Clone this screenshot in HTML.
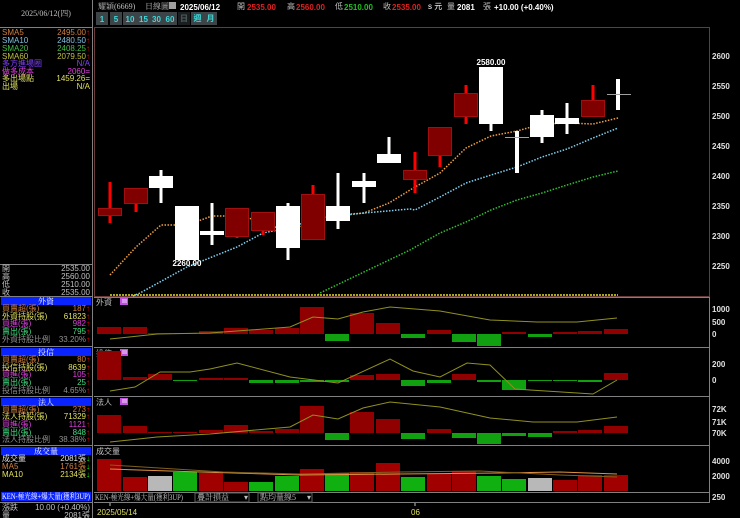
<!DOCTYPE html>
<html><head><meta charset="utf-8"><style>
html,body{margin:0;padding:0;background:#000;width:740px;height:518px;overflow:hidden}
svg{display:block}
text{font-family:"Liberation Sans","Noto Sans CJK TC",sans-serif;font-size:8px}
.s{font-family:"Liberation Serif","Noto Serif CJK SC",serif;font-size:8px}
</style></head><body>
<svg width="740" height="518" viewBox="0 0 740 518" xmlns="http://www.w3.org/2000/svg">
<rect width="740" height="518" fill="#000"/>
<rect x="0" y="0" width="92" height="27" fill="#000"/>
<text x="46" y="16" fill="#c0c0c0" text-anchor="middle" class="s">2025/06/12(四)</text>
<line x1="0" y1="27.5" x2="93" y2="27.5" stroke="#808080"/>
<line x1="92.5" y1="0" x2="92.5" y2="518" stroke="#808080"/>
<g class="s">
<text x="2" y="35" fill="#d08040">SMA5</text><text x="90" y="35" fill="#d08040" text-anchor="end">2495.00<tspan fill="#f00">↑</tspan></text>
<text x="2" y="43" fill="#80c0e0">SMA10</text><text x="90" y="43" fill="#80c0e0" text-anchor="end">2480.50<tspan fill="#f00">↑</tspan></text>
<text x="2" y="51" fill="#40c040">SMA20</text><text x="90" y="51" fill="#40c040" text-anchor="end">2408.25<tspan fill="#f00">↑</tspan></text>
<text x="2" y="59" fill="#c0c040">SMA60</text><text x="90" y="59" fill="#c0c040" text-anchor="end">2079.50<tspan fill="#f00">↑</tspan></text>
<text x="2" y="66" fill="#8040ff">多方進場圈</text><text x="90" y="66" fill="#8040ff" text-anchor="end">N/A</text>
<text x="2" y="74" fill="#e040e0">做多成本</text><text x="90" y="74" fill="#e040e0" text-anchor="end">2060=</text>
<text x="2" y="81" fill="#e0e060">多出場點</text><text x="90" y="81" fill="#e0e060" text-anchor="end">1459.26=</text>
<text x="2" y="89" fill="#e0e060">出場</text><text x="90" y="89" fill="#e0e060" text-anchor="end">N/A</text>
</g>
<line x1="0" y1="264.5" x2="93" y2="264.5" stroke="#808080"/>
<g class="s" fill="#c0c0c0">
<text x="2" y="271">開</text><text x="90" y="271" text-anchor="end">2535.00</text>
<text x="2" y="279">高</text><text x="90" y="279" text-anchor="end">2560.00</text>
<text x="2" y="287">低</text><text x="90" y="287" text-anchor="end">2510.00</text>
<text x="2" y="295">收</text><text x="90" y="295" text-anchor="end">2535.00</text>
</g>
<line x1="0" y1="296.5" x2="93" y2="296.5" stroke="#808080"/>
<g>
<rect x="1" y="297" width="90" height="8" fill="#0a24ff"/><text x="46" y="304" fill="#fff" text-anchor="middle" class="s">外資</text>
<rect x="1" y="348" width="90" height="8" fill="#0a24ff"/><text x="46" y="355" fill="#fff" text-anchor="middle" class="s">投信</text>
<rect x="1" y="398" width="90" height="8" fill="#0a24ff"/><text x="46" y="405" fill="#fff" text-anchor="middle" class="s">法人</text>
<rect x="1" y="447" width="90" height="8" fill="#0a24ff"/><text x="46" y="454" fill="#fff" text-anchor="middle" class="s">成交量</text>
</g>
<line x1="0" y1="346.5" x2="93" y2="346.5" stroke="#808080"/>
<line x1="0" y1="396.5" x2="93" y2="396.5" stroke="#808080"/>
<line x1="0" y1="445.5" x2="93" y2="445.5" stroke="#808080"/>
<g class="s">
<text x="2" y="311" fill="#d08040">買賣超(張)</text><text x="90" y="311" fill="#d08040" text-anchor="end">187<tspan fill="#f00">↑</tspan></text>
<text x="2" y="319" fill="#e0e060">外資持股(張)</text><text x="90" y="319" fill="#e0e060" text-anchor="end">61823<tspan fill="#f00">↑</tspan></text>
<text x="2" y="326" fill="#e040e0">買進(張)</text><text x="90" y="326" fill="#e040e0" text-anchor="end">982<tspan fill="#f00">↑</tspan></text>
<text x="2" y="334" fill="#40e080">賣出(張)</text><text x="90" y="334" fill="#40e080" text-anchor="end">795<tspan fill="#f00">↑</tspan></text>
<text x="2" y="342" fill="#909090">外資持股比例</text><text x="90" y="342" fill="#909090" text-anchor="end">33.20%<tspan fill="#f00">↑</tspan></text>
<text x="2" y="362" fill="#d08040">買賣超(張)</text><text x="90" y="362" fill="#d08040" text-anchor="end">80<tspan fill="#f00">↑</tspan></text>
<text x="2" y="370" fill="#e0e060">投信持股(張)</text><text x="90" y="370" fill="#e0e060" text-anchor="end">8639<tspan fill="#f00">↑</tspan></text>
<text x="2" y="377" fill="#e040e0">買進(張)</text><text x="90" y="377" fill="#e040e0" text-anchor="end">105<tspan fill="#f00">↑</tspan></text>
<text x="2" y="385" fill="#40e080">賣出(張)</text><text x="90" y="385" fill="#40e080" text-anchor="end">25<tspan fill="#f00">↑</tspan></text>
<text x="2" y="393" fill="#909090">投信持股比例</text><text x="90" y="393" fill="#909090" text-anchor="end">4.65%<tspan fill="#f00">↑</tspan></text>
<text x="2" y="412" fill="#d08040">買賣超(張)</text><text x="90" y="412" fill="#d08040" text-anchor="end">273<tspan fill="#f00">↑</tspan></text>
<text x="2" y="419" fill="#e0e060">法人持股(張)</text><text x="90" y="419" fill="#e0e060" text-anchor="end">71329<tspan fill="#f00">↑</tspan></text>
<text x="2" y="427" fill="#e040e0">買進(張)</text><text x="90" y="427" fill="#e040e0" text-anchor="end">1121<tspan fill="#f00">↑</tspan></text>
<text x="2" y="435" fill="#40e080">賣出(張)</text><text x="90" y="435" fill="#40e080" text-anchor="end">848<tspan fill="#f00">↑</tspan></text>
<text x="2" y="442" fill="#909090">法人持股比例</text><text x="90" y="442" fill="#909090" text-anchor="end">38.38%<tspan fill="#f00">↑</tspan></text>
<text x="2" y="461" fill="#e0e0e0">成交量</text><text x="90" y="461" fill="#e0e0e0" text-anchor="end">2081張<tspan fill="#0f0">↓</tspan></text>
<text x="2" y="469" fill="#d08040">MA5</text><text x="90" y="469" fill="#d08040" text-anchor="end">1761張<tspan fill="#0f0">↓</tspan></text>
<text x="2" y="477" fill="#e0e060">MA10</text><text x="90" y="477" fill="#e0e060" text-anchor="end">2134張<tspan fill="#0f0">↓</tspan></text>
</g>
<rect x="1" y="492" width="90" height="9" fill="#0a24ff"/><text x="2" y="499" fill="#fff" class="s" font-size="7" textLength="88" lengthAdjust="spacingAndGlyphs">KEN-極光線+爆大量(獲利3UP)</text>
<line x1="0" y1="502.5" x2="93" y2="502.5" stroke="#808080"/>
<g class="s" fill="#c0c0c0"><text x="2" y="510">漲跌</text><text x="90" y="510" text-anchor="end">10.00 (+0.40%)</text>
<text x="2" y="518">量</text><text x="90" y="518" text-anchor="end">2081張</text></g>

<text x="98" y="9" fill="#c0c0c0" class="s">耀穎(6669)</text>
<text x="145" y="9" fill="#c0c0c0" class="s">日線圖</text>
<rect x="169" y="2" width="7" height="7" fill="#a0a0a0"/>
<text x="180" y="10" fill="#fff" font-weight="bold" font-size="10">2025/06/12</text>
<text x="237" y="9" fill="#c0c0c0">開</text><text x="247" y="10" fill="#e02020" font-weight="bold" font-size="10">2535.00</text>
<text x="287" y="9" fill="#c0c0c0">高</text><text x="296" y="10" fill="#e02020" font-weight="bold" font-size="10">2560.00</text>
<text x="335" y="9" fill="#c0c0c0">低</text><text x="344" y="10" fill="#20c020" font-weight="bold" font-size="10">2510.00</text>
<text x="383" y="9" fill="#c0c0c0">收</text><text x="392" y="10" fill="#e02020" font-weight="bold" font-size="10">2535.00</text>
<text x="428" y="9" fill="#fff" font-size="7">s 元</text>
<text x="447" y="9" fill="#c0c0c0">量</text><text x="457" y="10" fill="#fff" font-weight="bold" font-size="10">2081</text><text x="483" y="9" fill="#c0c0c0">張</text>
<text x="494" y="10" fill="#fff" font-weight="bold" font-size="10">+10.00 (+0.40%)</text>
<g font-size="9" font-weight="bold" fill="#40d8d8">
<rect x="96" y="12" width="12" height="13" fill="#3c4448"/><text x="102" y="22" text-anchor="middle" fill="#40d8d8">1</text>
<rect x="110" y="12" width="12" height="13" fill="#3c4448"/><text x="116" y="22" text-anchor="middle" fill="#40d8d8">5</text>
<rect x="123" y="12" width="14" height="13" fill="#3c4448"/><text x="130" y="22" text-anchor="middle" fill="#40d8d8">10</text>
<rect x="137" y="12" width="13" height="13" fill="#3c4448"/><text x="143.5" y="22" text-anchor="middle" fill="#40d8d8">15</text>
<rect x="150" y="12" width="13" height="13" fill="#3c4448"/><text x="156.5" y="22" text-anchor="middle" fill="#40d8d8">30</text>
<rect x="163" y="12" width="14" height="13" fill="#3c4448"/><text x="170" y="22" text-anchor="middle" fill="#40d8d8">60</text>
<rect x="178" y="12" width="12" height="13" fill="#1a1e20"/><text x="184" y="21" text-anchor="middle" fill="#506060" font-size="7">日</text>
<rect x="191" y="12" width="13" height="13" fill="#3c4448"/><text x="197.5" y="21" text-anchor="middle" fill="#40d8d8" font-size="7">週</text>
<rect x="204" y="12" width="13" height="13" fill="#3c4448"/><text x="210.5" y="21" text-anchor="middle" fill="#40d8d8" font-size="7">月</text>
</g>
<rect x="94.5" y="27.5" width="615" height="269" fill="none" stroke="#6a3a3a"/>
<g fill="#e0e0e0" font-size="8" font-weight="bold">
<text x="712" y="59">2600</text><text x="712" y="89">2550</text><text x="712" y="119">2500</text><text x="712" y="149">2450</text>
<text x="712" y="179">2400</text><text x="712" y="209">2350</text><text x="712" y="239">2300</text><text x="712" y="269">2250</text>
</g>
<polyline fill="none" stroke="#f0a040" stroke-width="1.5" stroke-dasharray="1.5 1.5" points="110,275 136,247 161,225 187,225 212,216 237,216 263,221 288,233 313,219 338,215 364,213 389,203 415,187 440,173 466,148 491,136 517,131 542,124 567,123 593,124 618,118"/>
<polyline fill="none" stroke="#80d0f0" stroke-width="1.5" stroke-dasharray="1.5 1.5" points="133,296 140,293 187,267 212,257 237,247 263,233 288,228 313,220 338,216 364,213 410,209 415,210 440,197 466,183 491,175 517,167 542,157 567,149 593,138 618,128"/>
<polyline fill="none" stroke="#30c030" stroke-width="1.5" stroke-dasharray="1.5 1.5" points="318,295 320,293 410,250 440,233 466,222 491,210 517,200 542,193 567,185 593,177 618,171"/>
<line x1="110" y1="295" x2="618" y2="295" stroke="#e0e020" stroke-width="1.5" stroke-dasharray="2 1"/>
<g>
<g stroke="#ff0000" stroke-width="3">
<line x1="110" y1="182" x2="110" y2="223"/><line x1="136" y1="188" x2="136" y2="212"/>
<line x1="237" y1="208" x2="237" y2="238"/><line x1="263" y1="212" x2="263" y2="235"/>
<line x1="313" y1="185" x2="313" y2="239"/><line x1="415" y1="152" x2="415" y2="193"/>
<line x1="440" y1="127" x2="440" y2="167"/><line x1="466" y1="85" x2="466" y2="124"/>
<line x1="593" y1="85" x2="593" y2="116"/>
</g>
<g fill="#800000" stroke="#a01010" stroke-width="1">
<rect x="98.5" y="208.5" width="23" height="7"/><rect x="124.5" y="188.5" width="23" height="15"/>
<rect x="225.5" y="208.5" width="23" height="28"/><rect x="251.5" y="212.5" width="23" height="18"/>
<rect x="301.5" y="194.5" width="23" height="45"/><rect x="403.5" y="170.5" width="23" height="9"/>
<rect x="428.5" y="127.5" width="23" height="28"/><rect x="454.5" y="93.5" width="23" height="23"/>
<rect x="581.5" y="100.5" width="23" height="16"/>
</g>
<g stroke="#fff" stroke-width="3">
<line x1="161" y1="170" x2="161" y2="203"/><line x1="212" y1="203" x2="212" y2="245"/>
<line x1="288" y1="203" x2="288" y2="260"/><line x1="338" y1="173" x2="338" y2="229"/>
<line x1="364" y1="173" x2="364" y2="203"/><line x1="389" y1="137" x2="389" y2="163"/>
<line x1="491" y1="67" x2="491" y2="131"/><line x1="542" y1="110" x2="542" y2="143"/>
<line x1="567" y1="103" x2="567" y2="134"/>
</g>
<g fill="#fff">
<rect x="149" y="176" width="24" height="12"/><rect x="175" y="206" width="24" height="54"/>
<rect x="200" y="231" width="24" height="4"/><rect x="276" y="206" width="24" height="42"/>
<rect x="326" y="206" width="24" height="15"/><rect x="352" y="181" width="24" height="6"/>
<rect x="377" y="154" width="24" height="9"/><rect x="479" y="67" width="24" height="57"/>
<rect x="530" y="115" width="24" height="22"/><rect x="555" y="118" width="24" height="6"/>
<rect x="515" y="131" width="4" height="42"/><rect x="616" y="79" width="4" height="31"/>
</g>
<line x1="505" y1="137.5" x2="529" y2="137.5" stroke="#a0a0a0"/>
<line x1="607" y1="94.5" x2="631" y2="94.5" stroke="#a0a0a0"/>
<text x="187" y="266" fill="#fff" text-anchor="middle" font-weight="bold">2260.00</text>
<text x="491" y="65" fill="#fff" text-anchor="middle" font-weight="bold">2580.00</text>
</g>
<g stroke="#808080" fill="none">
<line x1="94" y1="297.5" x2="710" y2="297.5"/>
<line x1="94" y1="347.5" x2="710" y2="347.5"/>
<line x1="94" y1="396.5" x2="710" y2="396.5"/>
<line x1="94" y1="445.5" x2="710" y2="445.5"/>
<line x1="94" y1="492.5" x2="710" y2="492.5"/>
<line x1="94" y1="502.5" x2="710" y2="502.5"/>
<line x1="709.5" y1="297" x2="709.5" y2="503"/>
</g>
<g class="s" fill="#c0c0c0"><text x="96" y="305">外資</text><text x="96" y="356">投信</text><text x="96" y="405">法人</text><text x="96" y="454">成交量</text></g>
<g fill="#c050e0"><rect x="120" y="298" width="8" height="7"/><rect x="120" y="349" width="8" height="7"/><rect x="120" y="398" width="8" height="7"/></g>
<g stroke="#fff" stroke-width="0.8"><line x1="122" y1="300" x2="127" y2="300"/><line x1="122" y1="302" x2="127" y2="302"/><line x1="122" y1="351" x2="127" y2="351"/><line x1="122" y1="353" x2="127" y2="353"/><line x1="122" y1="400" x2="127" y2="400"/><line x1="122" y1="402" x2="127" y2="402"/></g>
<g fill="#e0e0e0" font-size="8" font-weight="bold">
<text x="712" y="312">1000</text><text x="712" y="325">500</text><text x="712" y="337">0</text>
<text x="712" y="367">200</text><text x="712" y="383">0</text>
<text x="712" y="412">72K</text><text x="712" y="425">71K</text><text x="712" y="436">70K</text>
<text x="712" y="464">4000</text><text x="712" y="479">2000</text><text x="712" y="500">250</text>
</g>
<g fill="#900000">
<rect x="97" y="327" width="24" height="7"/><rect x="123" y="327" width="24" height="7"/><rect x="148" y="333" width="24" height="1"/><rect x="173" y="333" width="24" height="1"/><rect x="199" y="331" width="24" height="3"/><rect x="224" y="328" width="24" height="6"/><rect x="249" y="330" width="24" height="4"/><rect x="275" y="328" width="24" height="6"/><rect x="300" y="307" width="24" height="27"/><rect x="350" y="313" width="24" height="21"/><rect x="376" y="323" width="24" height="11"/><rect x="427" y="330" width="24" height="4"/><rect x="502" y="332" width="24" height="2"/><rect x="553" y="332" width="24" height="2"/><rect x="578" y="331" width="24" height="3"/><rect x="604" y="329" width="24" height="5"/>
</g>
<g fill="#10a010">
<rect x="325" y="334" width="24" height="7"/><rect x="401" y="334" width="24" height="4"/><rect x="452" y="334" width="24" height="8"/><rect x="477" y="334" width="24" height="12"/><rect x="528" y="334" width="24" height="3"/>
</g>
<polyline fill="none" stroke="#909020" points="110,339 157,334 210,333 290,327 313,317 338,319 363,312 390,307 440,311 490,320 537,322 577,322 617,318"/>
<g fill="#900000">
<rect x="97" y="351" width="24" height="29"/><rect x="123" y="377" width="24" height="3"/><rect x="148" y="374" width="24" height="6"/><rect x="199" y="378" width="24" height="2"/><rect x="224" y="378" width="24" height="2"/><rect x="350" y="375" width="24" height="5"/><rect x="376" y="374" width="24" height="6"/><rect x="452" y="374" width="24" height="6"/><rect x="604" y="373" width="24" height="7"/>
</g>
<g fill="#10a010">
<rect x="173" y="380" width="24" height="1"/><rect x="249" y="380" width="24" height="3"/><rect x="275" y="380" width="24" height="3"/><rect x="300" y="380" width="24" height="2"/><rect x="325" y="380" width="24" height="2"/><rect x="401" y="380" width="24" height="6"/><rect x="427" y="380" width="24" height="3"/><rect x="477" y="380" width="24" height="2"/><rect x="502" y="380" width="24" height="10"/><rect x="528" y="380" width="24" height="1"/><rect x="553" y="380" width="24" height="1"/><rect x="578" y="380" width="24" height="2"/>
</g>
<polyline fill="none" stroke="#909020" points="110,391 135,387 160,372 190,372 210,369 237,363 290,377 338,383 390,359 413,371 440,377 467,363 490,365 515,389 530,390 593,394 617,380"/>
<g fill="#900000">
<rect x="97" y="415" width="24" height="18"/><rect x="123" y="426" width="24" height="7"/><rect x="148" y="432" width="24" height="1"/><rect x="173" y="432" width="24" height="1"/><rect x="199" y="430" width="24" height="3"/><rect x="224" y="425" width="24" height="8"/><rect x="249" y="431" width="24" height="2"/><rect x="275" y="429" width="24" height="4"/><rect x="300" y="406" width="24" height="27"/><rect x="350" y="412" width="24" height="21"/><rect x="376" y="419" width="24" height="14"/><rect x="427" y="429" width="24" height="4"/><rect x="553" y="431" width="24" height="2"/><rect x="578" y="430" width="24" height="3"/><rect x="604" y="426" width="24" height="7"/>
</g>
<g fill="#10a010">
<rect x="325" y="433" width="24" height="7"/><rect x="401" y="433" width="24" height="6"/><rect x="452" y="433" width="24" height="5"/><rect x="477" y="433" width="24" height="11"/><rect x="502" y="433" width="24" height="3"/><rect x="528" y="433" width="24" height="4"/>
</g>
<polyline fill="none" stroke="#909020" points="110,442 157,437 210,434 290,427 313,415 338,419 363,408 390,402 440,407 490,418 533,422 577,422 617,417"/>
<g fill="#a00000">
<rect x="97" y="459" width="24" height="32"/><rect x="123" y="477" width="24" height="14"/><rect x="199" y="473" width="24" height="18"/><rect x="224" y="482" width="24" height="9"/><rect x="300" y="469" width="24" height="22"/><rect x="350" y="472" width="24" height="19"/><rect x="376" y="463" width="24" height="28"/><rect x="427" y="474" width="24" height="17"/><rect x="452" y="471" width="24" height="20"/><rect x="553" y="480" width="24" height="11"/><rect x="578" y="475" width="24" height="16"/><rect x="604" y="475" width="24" height="16"/>
</g>
<g fill="#10b010">
<rect x="173" y="472" width="24" height="19"/><rect x="249" y="482" width="24" height="9"/><rect x="275" y="476" width="24" height="15"/><rect x="325" y="473" width="24" height="18"/><rect x="401" y="477" width="24" height="14"/><rect x="477" y="476" width="24" height="15"/><rect x="502" y="479" width="24" height="12"/>
</g>
<g fill="#b8b8b8"><rect x="148" y="476" width="24" height="15"/><rect x="528" y="478" width="24" height="13"/></g>
<polyline fill="none" stroke="#e09040" points="110,469 200,472 300,475 400,474 500,473 560,472 617,474"/>
<polyline fill="none" stroke="#806020" points="110,465 223,472 300,474 400,472 480,471 560,475 617,477"/>
<text x="95" y="500" fill="#c0c0c0" class="s" font-size="7" textLength="88" lengthAdjust="spacingAndGlyphs">KEN-極光線+爆大量(獲利3UP)</text>
<rect x="195" y="493" width="54" height="9" fill="#000" stroke="#606060"/>
<text x="197" y="500" fill="#c0c0c0" class="s" font-size="7">疊計損益</text><text x="244" y="500" fill="#c0c0c0" font-size="6">▾</text>
<rect x="258" y="493" width="54" height="9" fill="#000" stroke="#606060"/>
<text x="260" y="500" fill="#c0c0c0" class="s" font-size="7">點均量線5</text><text x="307" y="500" fill="#c0c0c0" font-size="6">▾</text>
<line x1="110" y1="503" x2="110" y2="506" stroke="#c0c0c0"/>
<line x1="415" y1="503" x2="415" y2="506" stroke="#c0c0c0"/>
<text x="97" y="515" fill="#e0e060" font-size="8">2025/05/14</text>
<text x="411" y="515" fill="#e0e060" font-size="8">06</text>
</svg>
</body></html>
